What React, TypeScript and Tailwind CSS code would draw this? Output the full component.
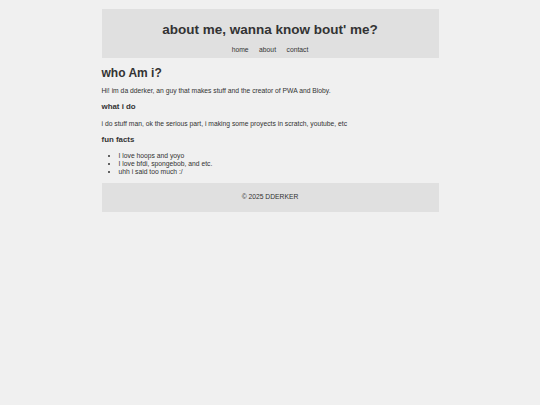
export default function App() {
  return (
    <div className="min-h-[405px] bg-[#f0f0f0] pt-[9px] font-['Liberation_Sans',Arial,sans-serif] text-[#333]">
      <div className="mx-auto w-[337px]">
        <header className="bg-[#e0e0e0] pt-[13px] pb-[4px] text-center">
          <h1 className="text-[13.5px] leading-[15.5px] font-bold">about me, wanna know bout' me?</h1>
          <nav className="mt-[8px] flex justify-center gap-[10.5px] text-[6.75px] leading-[8px]">
            <a href="#">home</a>
            <a href="#">about</a>
            <a href="#">contact</a>
          </nav>
        </header>

        <main className="pt-[8px]">
          <h2 className="text-[12px] leading-[14px] font-bold">who Am i?</h2>
          <p className="mt-[7px] text-[6.75px] leading-[8px]">
            Hi! im da dderker, an guy that makes stuff and the creator of PWA and Bloby.
          </p>
          <h3 className="mt-[7.5px] text-[7.9px] leading-[9px] font-bold">what i do</h3>
          <p className="mt-[8.5px] text-[6.75px] leading-[8px]">
            i do stuff man, ok the serious part, i making some proyects in scratch, youtube, etc
          </p>
          <h3 className="mt-[7.5px] text-[7.9px] leading-[9px] font-bold">fun facts</h3>
          <ul className="mt-[7.5px] list-disc pl-[17px] text-[6.75px] leading-[8px]">
            <li>I love hoops and yoyo</li>
            <li>I love bfdi, spongebob, and etc.</li>
            <li>uhh i said too much :/</li>
          </ul>
        </main>

        <footer className="mt-[7px] flex h-[29px] items-center justify-center bg-[#e0e0e0] text-[6.75px]">
          © 2025 DDERKER
        </footer>
      </div>
    </div>
  );
}
